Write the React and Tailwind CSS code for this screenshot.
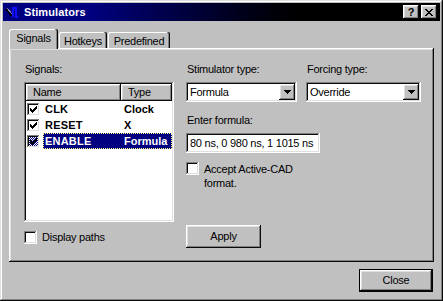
import React from 'react';

// win98 bevels
const RAISED = 'shadow-[inset_-1px_-1px_#0a0a0a,inset_1px_1px_#fff,inset_-2px_-2px_#808080,inset_2px_2px_#dfdfdf]';
const SUNKEN = 'shadow-[inset_-1px_-1px_#fff,inset_1px_1px_#808080,inset_-2px_-2px_#dfdfdf,inset_2px_2px_#0a0a0a]';

const CHECK_PX = [
  [6, 0], [5, 1], [6, 1], [0, 2], [4, 2], [5, 2], [6, 2], [0, 3], [1, 3], [3, 3], [4, 3], [5, 3],
  [0, 4], [1, 4], [2, 4], [3, 4], [4, 4], [1, 5], [2, 5], [3, 5], [2, 6],
];
const X_PX = [
  [0, 0], [1, 0], [6, 0], [7, 0], [1, 1], [2, 1], [5, 1], [6, 1], [2, 2], [3, 2], [4, 2], [5, 2],
  [3, 3], [4, 3], [2, 4], [3, 4], [4, 4], [5, 4], [1, 5], [2, 5], [5, 5], [6, 5], [0, 6], [1, 6], [6, 6], [7, 6],
];
const ARROW_PX = [
  [0, 0], [1, 0], [2, 0], [3, 0], [4, 0], [5, 0], [6, 0], [1, 1], [2, 1], [3, 1], [4, 1], [5, 1],
  [2, 2], [3, 2], [4, 2], [3, 3],
];

const Pixels = ({ px, w, h, className }) => (
  <svg width={w} height={h} viewBox={`0 0 ${w} ${h}`} shapeRendering="crispEdges" className={className}>
    {px.map(([x, y]) => (
      <rect key={`${x}-${y}`} x={x} y={y} width="1" height="1" fill="#000" />
    ))}
  </svg>
);

const Checkbox = ({ checked, dither }) => (
  <span className={`relative block w-[13px] h-[13px] shrink-0 bg-white ${SUNKEN}`}>
    {dither && (
      <span className="absolute inset-[2px] bg-[repeating-conic-gradient(#000080_0_25%,#fff_0_50%)] bg-[length:2px_2px]" />
    )}
    {checked && <Pixels px={CHECK_PX} w={7} h={7} className="absolute left-[3px] top-[3px]" />}
  </span>
);

const Combo = ({ value, width }) => (
  <div className={`flex h-[20px] bg-white p-[2px] ${SUNKEN} ${width}`}>
    <span className="flex-1 pl-[2px] leading-[16px] whitespace-nowrap">{value}</span>
    <span className={`w-[16px] h-[16px] bg-[#c0c0c0] flex items-center justify-center ${RAISED}`}>
      <Pixels px={ARROW_PX} w={7} h={4} />
    </span>
  </div>
);

const TitleBar = () => (
  <div className="h-[18px] flex items-center pl-[2px] pr-[3px] bg-linear-to-r from-[#000080] from-20% to-black to-75%">
    <svg width="16" height="14" viewBox="0 0 16 14" shapeRendering="crispEdges">
      <path d="M1 4 L7 11" stroke="#000" strokeWidth="2" fill="none" />
      <path d="M2 3 L7 9" stroke="#8080c0" strokeWidth="1" fill="none" />
      <path d="M8 12 V3 H11 V12 H13" stroke="#1010ff" strokeWidth="2" fill="none" />
    </svg>
    <span className="ml-[3px] text-white font-bold text-[11px] tracking-[0.1px] leading-[13px]">Stimulators</span>
    <div className="flex-1" />
    <div className="flex gap-[2px]">
      <button className={`w-[16px] h-[14px] bg-[#c0c0c0] flex items-center justify-center font-bold text-[11px] leading-[11px] ${RAISED}`}>
        ?
      </button>
      <button className={`w-[16px] h-[14px] bg-[#c0c0c0] flex items-center justify-center ${RAISED}`}>
        <Pixels px={X_PX} w={8} h={7} />
      </button>
    </div>
  </div>
);

const TAB_SHADOW = 'shadow-[inset_-1px_0_#0a0a0a,inset_-2px_0_#808080,inset_1px_1px_#fff]';

const Tabs = () => (
  <div className="flex items-end">
    <div className={`relative z-10 w-[49px] h-[20px] -mb-px bg-[#c0c0c0] rounded-t-[2px] pt-[3px] text-center leading-[13px] ${TAB_SHADOW}`}>
      Signals
    </div>
    <div className={`ml-px w-[48px] h-[16px] bg-[#c0c0c0] rounded-t-[2px] pt-[3px] text-center leading-[13px] ${TAB_SHADOW}`}>
      Hotkeys
    </div>
    <div className={`ml-px w-[62px] h-[16px] bg-[#c0c0c0] rounded-t-[2px] pt-[3px] text-center leading-[13px] ${TAB_SHADOW}`}>
      Predefined
    </div>
  </div>
);

const signals = [
  { name: 'CLK', type: 'Clock' },
  { name: 'RESET', type: 'X' },
  { name: 'ENABLE', type: 'Formula', selected: true },
];

const ListView = () => (
  <div className={`mt-[6px] h-[140px] bg-white p-[2px] flex flex-col ${SUNKEN}`}>
    <div className="flex h-[17px] shrink-0">
      <div className={`w-[95px] pl-[7px] leading-[17px] bg-[#c0c0c0] ${RAISED}`}>Name</div>
      <div className={`flex-1 pl-[7px] leading-[17px] bg-[#c0c0c0] ${RAISED}`}>Type</div>
    </div>
    {signals.map((s) => (
      <div key={s.name} className="flex items-center h-[16px]">
        <div className="pl-px pr-[3px]">
          <Checkbox checked dither={s.selected} />
        </div>
        <div
          className={`flex-1 flex h-[16px] items-center font-bold ${
            s.selected ? 'bg-[#000080] text-white outline-1 outline-dotted outline-[#ffff80] -outline-offset-1' : ''
          }`}
        >
          <span className="w-[78px] pl-[2px] tracking-[0.2px]">{s.name}</span>
          <span className="pl-[3px] tracking-normal">{s.type}</span>
        </div>
      </div>
    ))}
  </div>
);

const Panel = () => (
  <div className={`h-[214px] flex pl-[15px] pt-[15px] ${RAISED}`}>
    <div className="w-[150px] flex flex-col">
      <div className="h-[13px] leading-[13px] pl-px">Signals:</div>
      <ListView />
      <div className="mt-[9px] flex items-start gap-[5px]">
        <Checkbox />
        <span className="leading-[13px]">Display paths</span>
      </div>
    </div>

    <div className="ml-[12px] flex flex-col">
      <div className="flex gap-[9px]">
        <div>
          <div className="h-[13px] leading-[13px] pl-px">Stimulator type:</div>
          <div className="mt-[6px]">
            <Combo value="Formula" width="w-[111px]" />
          </div>
        </div>
        <div>
          <div className="h-[13px] leading-[13px] pl-px">Forcing type:</div>
          <div className="mt-[6px]">
            <Combo value="Override" width="w-[115px]" />
          </div>
        </div>
      </div>

      <div className="mt-[12px] h-[13px] leading-[13px] pl-px">Enter formula:</div>
      <div className={`mt-[6px] w-[134px] h-[20px] bg-white p-[2px] ${SUNKEN}`}>
        <div className="pl-[2px] leading-[16px] whitespace-nowrap overflow-hidden">80 ns, 0 980 ns, 1 1015 ns</div>
      </div>

      <div className="mt-[9px] flex items-start gap-[5px]">
        <Checkbox />
        <div className="leading-[14px]">
          Accept Active-CAD
          <br />
          format.
        </div>
      </div>

      <button className={`mt-[35px] w-[75px] h-[23px] bg-[#c0c0c0] text-center leading-[21px] ${RAISED}`}>
        Apply
      </button>
    </div>
  </div>
);

export default function App() {
  return (
    <div className="w-[443px] h-[301px] bg-[#c0c0c0] p-[3px] flex flex-col font-['Liberation_Sans',Arial,sans-serif] text-[11px] tracking-[-0.25px] text-black shadow-[inset_-1px_-1px_#0a0a0a,inset_1px_1px_#dfdfdf,inset_-2px_-2px_#808080,inset_2px_2px_#fff]">
      <TitleBar />
      <div className="flex-1 flex flex-col px-[6px] pt-[8px]">
        <Tabs />
        <Panel />
        <div className="flex justify-end mt-[7px] pr-px">
          <button className="w-[74px] h-[23px] border border-black bg-[#c0c0c0]">
            <div className={`h-full w-full leading-[21px] text-center ${RAISED}`}>Close</div>
          </button>
        </div>
      </div>
    </div>
  );
}
